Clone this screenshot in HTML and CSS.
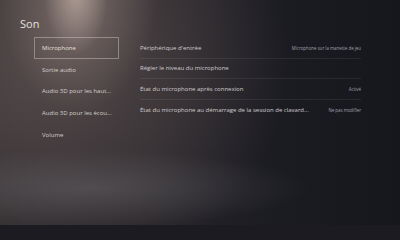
FILE: index.html
```html
<!DOCTYPE html>
<html lang="fr">
<head>
<meta charset="utf-8">
<title>Son</title>
<link rel="stylesheet" href="styles.css">
</head>
<body>
<div class="screen">
  <h1 class="title">Son</h1>
  <div class="content">
    <nav class="menu">
      <div class="menu-item selected">Microphone</div>
      <div class="menu-item">Sortie audio</div>
      <div class="menu-item">Audio 3D pour les haut...</div>
      <div class="menu-item">Audio 3D pour les écou...</div>
      <div class="menu-item">Volume</div>
    </nav>
    <section class="list">
      <div class="row"><span class="label">Périphérique d'entrée</span><span class="value">Microphone sur la manette de jeu</span></div>
      <div class="row"><span class="label">Régler le niveau du microphone</span><span class="value"></span></div>
      <div class="row"><span class="label">État du microphone après connexion</span><span class="value">Activé</span></div>
      <div class="row last"><span class="label">État du microphone au démarrage de la session de clavard...</span><span class="value">Ne pas modifier</span></div>
    </section>
  </div>
</div>
</body>
</html>
```

FILE: styles.css
```css
html, body {
  margin: 0;
  padding: 0;
  background: #1c1b21;
}
body {
  font-family: "Open Sans", "Noto Sans", sans-serif;
  color: #d6d2d0;
}
.screen {
  width: 400px;
  height: 225px;
  overflow: hidden;
  box-sizing: border-box;
  padding-top: 16.5px;
  background:
    radial-gradient(ellipse 32px 60px at 76px -6px, rgba(215,195,185,0.55), rgba(215,195,185,0) 100%),
    radial-gradient(ellipse 80px 125px at 78px -12px, rgba(170,150,142,0.50), rgba(170,150,142,0) 100%),
    radial-gradient(ellipse 220px 38px at 90px 188px, rgba(125,125,130,0.32), rgba(125,125,130,0) 100%),
    radial-gradient(ellipse 240px 230px at 50px 55px, rgba(88,77,77,0.95), rgba(88,77,77,0) 100%),
    linear-gradient(90deg, #2d2a2d 0%, #262429 40%, #1b1b22 70%, #16161d 100%);
}
.title {
  margin: 0 0 6.5px 20px;
  font-size: 11px;
  line-height: 14px;
  font-weight: 400;
  color: #e4e0dd;
}
.content {
  display: flex;
  padding-left: 34px;
  gap: 21px;
}
.menu {
  width: 85px;
  display: flex;
  flex-direction: column;
}
.menu-item {
  height: 21.75px;
  box-sizing: border-box;
  display: flex;
  align-items: center;
  padding-left: 7px;
  font-size: 6px;
  white-space: nowrap;
  color: #d4d0ce;
  border: 1px solid transparent;
}
.menu-item.selected {
  border-color: rgba(210,205,205,0.45);
  color: #e4e1df;
}
.list {
  width: 221px;
  padding-top: 1px;
  display: flex;
  flex-direction: column;
}
.row {
  height: 20.5px;
  box-sizing: border-box;
  display: flex;
  align-items: center;
  justify-content: space-between;
  border-bottom: 1px solid rgba(255,255,255,0.07);
}
.row.last {
  border-bottom: none;
}
.label {
  font-size: 6px;
  color: #d0ccce;
  white-space: nowrap;
}
.value {
  font-size: 4.4px;
  color: #a2a2aa;
  white-space: nowrap;
}
```
